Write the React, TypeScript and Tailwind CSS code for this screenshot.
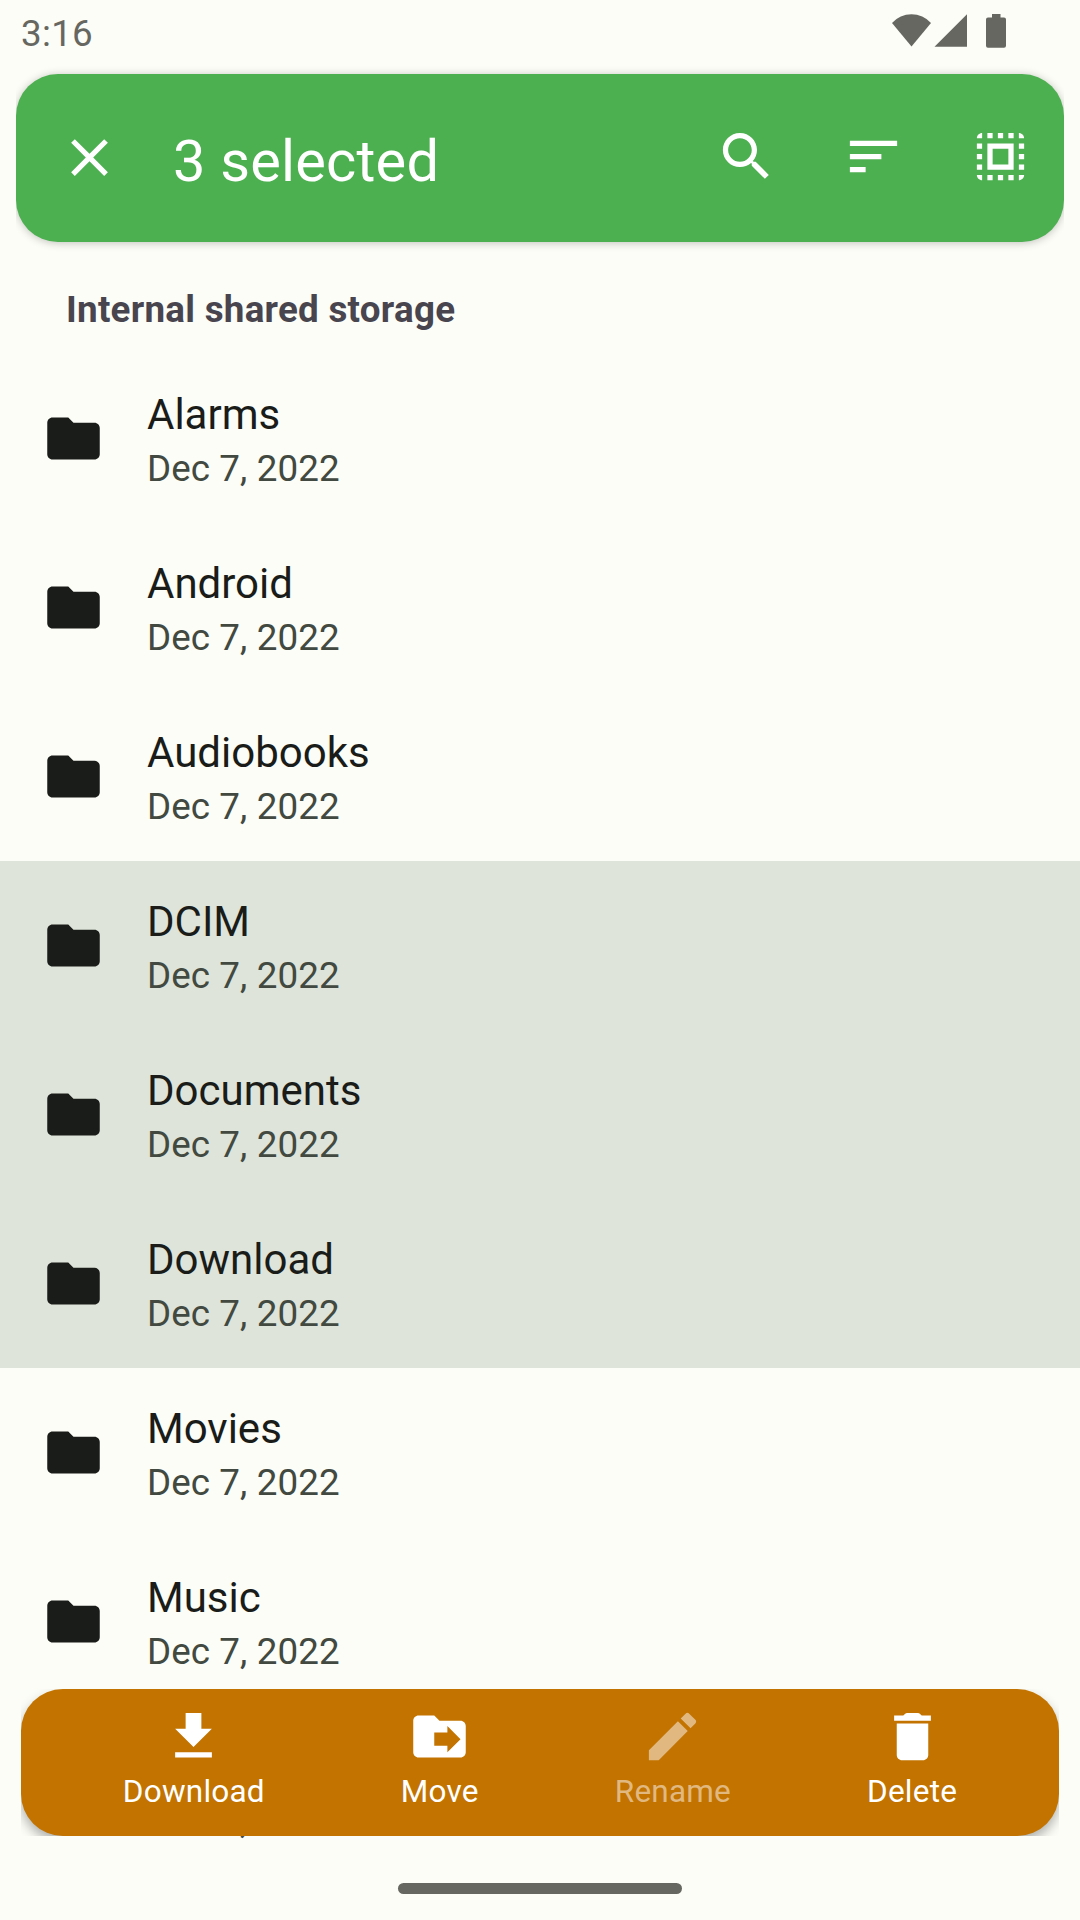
const folders = ["Alarms", "Android", "Audiobooks", "DCIM", "Documents", "Download", "Movies", "Music"];
const selected = new Set(["DCIM", "Documents", "Download"]);

function Icon({ d }: { d: string }) {
  return (
    <svg viewBox="0 0 24 24" className="size-[63px] shrink-0" fill="currentColor">
      <path fillRule="evenodd" d={d} />
    </svg>
  );
}

const paths = {
  folder: "M10 4H4c-1.1 0-1.99.9-1.99 2L2 18c0 1.1.9 2 2 2h16c1.1 0 2-.9 2-2V8c0-1.1-.9-2-2-2h-8l-2-2z",
  close: "M19 6.41L17.59 5 12 10.59 6.41 5 5 6.41 10.59 12 5 17.59 6.41 19 12 13.41 17.59 19 19 17.59 13.41 12z",
  search: "M15.5 14h-.79l-.28-.27C15.41 12.59 16 11.11 16 9.5 16 5.91 13.09 3 9.5 3S3 5.91 3 9.5 5.91 16 9.5 16c1.61 0 3.09-.59 4.23-1.57l.27.28v.79l5 4.99L20.49 19l-4.99-5zm-6 0C7.01 14 5 11.99 5 9.5S7.01 5 9.5 5 14 7.01 14 9.5 11.99 14 9.5 14z",
  sort: "M3 18h6v-2H3v2zM3 6v2h18V6H3zm0 7h12v-2H3v2z",
  selectAll: "M3 5h2V3c-1.1 0-2 .9-2 2zm0 8h2v-2H3v2zm4 8h2v-2H7v2zM3 9h2V7H3v2zm10-6h-2v2h2V3zm6 0v2h2c0-1.1-.9-2-2-2zM5 21v-2H3c0 1.1.9 2 2 2zm-2-4h2v-2H3v2zM9 3H7v2h2V3zm2 18h2v-2h-2v2zm8-8h2v-2h-2v2zm0 8c1.1 0 2-.9 2-2h-2v2zm0-12h2V7h-2v2zm0 8h2v-2h-2v2zm-4 4h2v-2h-2v2zm0-16h2V3h-2v2zM7 17h10V7H7v10zm2-8h6v6H9V9z",
  download: "M19 9h-4V3H9v6H5l7 7 7-7zM5 18v2h14v-2H5z",
  move: "M20 6h-8l-2-2H4c-1.1 0-2 .9-2 2v12c0 1.1.9 2 2 2h16c1.1 0 2-.9 2-2V8c0-1.1-.9-2-2-2zM15 18v-2.5h-5v-5h5V8l5 5z",
  rename: "M3 17.25V21h3.75L17.81 9.94l-3.75-3.75L3 17.25zM20.71 7.04c.39-.39.39-1.02 0-1.41l-2.34-2.34c-.39-.39-1.02-.39-1.41 0l-1.83 1.83 3.75 3.75 1.83-1.83z",
  trash: "M6 19c0 1.1.9 2 2 2h8c1.1 0 2-.9 2-2V7H6v12zM19 4h-3.5l-.71-.71c-.18-.18-.44-.29-.7-.29H9.91c-.26 0-.52.11-.7.29L8.5 4H5v2h14V4z",
};

const actions = [
  { label: "Download", icon: paths.download, tone: "text-white" },
  { label: "Move", icon: paths.move, tone: "text-white" },
  { label: "Rename", icon: paths.rename, tone: "text-[#e1b87f]" },
  { label: "Delete", icon: paths.trash, tone: "text-white" },
];

function StatusBar() {
  return (
    <div className="flex h-[74px] items-start justify-between pl-[21px] pr-[74px] text-[#666761]">
      <span className="pt-[12px] text-[36.75px] leading-[44px] tracking-[0.3px]">3:16</span>
      <svg width="116" height="60" viewBox="890 0 116 60" fill="currentColor">
        <path d="M892 23A26 26 0 0 1 931 23L911.500 46.500z" />
        <path d="M967 14.300V46.700H934.500z" />
        <path d="M992 14h8.500v3.500h3.500q2 0 2 2V45.700q0 2-2 2H988q-2 0-2-2V19.500q0-2 2-2h4z" />
      </svg>
    </div>
  );
}

export default function App() {
  return (
    <div className="relative flex h-[1920px] w-[1080px] flex-col overflow-hidden bg-[#fcfdf7] font-[Roboto,sans-serif]">
      <StatusBar />
      <div className="-my-4 px-4">
        <div className="overflow-hidden py-4">
          <header className="flex h-[168px] items-center rounded-[42px] bg-[#4caf50] pl-[42px] text-white shadow-[0_1px_8px_rgba(0,0,0,0.24)]">
            <div className="pb-px">
              <Icon d={paths.close} />
            </div>
            <h1 className="ml-[52px] grow pt-[5px] text-[57.75px] leading-[68px] tracking-[0.2px]">3 selected</h1>
            <div className="flex pb-[3px]">
              {[paths.search, paths.sort, paths.selectAll].map((d) => (
                <button key={d} className="flex w-[127px] justify-center">
                  <Icon d={d} />
                </button>
              ))}
            </div>
          </header>
        </div>
      </div>
      <h2 className="h-[112px] pl-[66px] pt-[46px] text-[36.75px] font-bold leading-[43px] tracking-[0.27px] text-[#49454f]">Internal shared storage</h2>
      <ul>
        {[...folders, "Notifications"].map((name) => (
          <li key={name} className={`flex h-[169px] items-center gap-[42px] pl-[42px] ${selected.has(name) ? "bg-[#dee4d9]" : ""}`}>
            <span className="text-[#1a1c19]"><Icon d={paths.folder} /></span>
            <div className="pt-[6px]">
              <p className="text-[42px] leading-[54px] text-[#1a1c19]">{name}</p>
              <p className="text-[36.75px] leading-[53px] tracking-[0.1px] text-[#424940]">Dec 7, 2022</p>
            </div>
          </li>
        ))}
      </ul>
      <div className="absolute left-[21px] top-[1689px] h-[147px] w-[1038px] overflow-hidden">
        <nav className="flex h-full justify-center gap-[136px] rounded-[42px] bg-[#c27300] pt-4 shadow-[0_6px_12px_rgba(0,0,0,0.3)]">
          {actions.map((a) => (
            <button key={a.label} className={`flex flex-col items-center ${a.tone}`}>
              <Icon d={a.icon} />
              <span className="mt-[5px] text-[31.5px] leading-[38px] tracking-[0.22px]">{a.label}</span>
            </button>
          ))}
        </nav>
      </div>
      <div className="absolute bottom-0 left-0 flex h-[84px] w-full items-end justify-center pb-[26px]">
        <div className="h-[11px] w-[284px] rounded-full bg-[#666761]" />
      </div>
    </div>
  );
}
